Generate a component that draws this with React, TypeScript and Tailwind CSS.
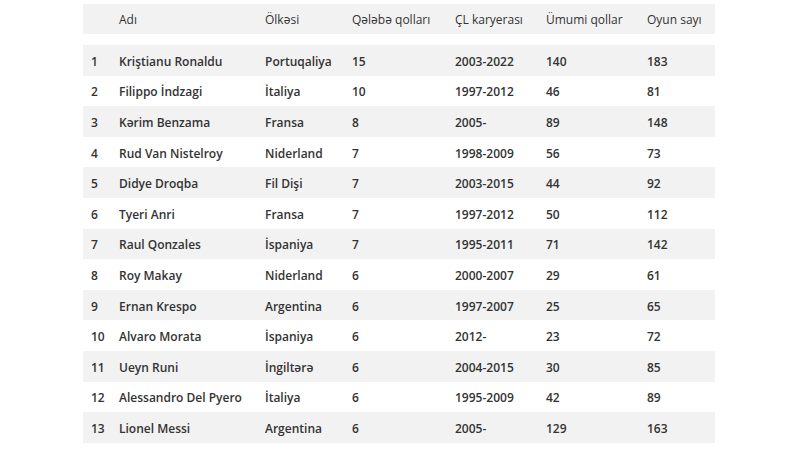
import React from "react";

const rows = [
  ["1", "Kriştianu Ronaldu", "Portuqaliya", "15", "2003-2022", "140", "183"],
  ["2", "Filippo İndzagi", "İtaliya", "10", "1997-2012", "46", "81"],
  ["3", "Kərim Benzama", "Fransa", "8", "2005-", "89", "148"],
  ["4", "Rud Van Nistelroy", "Niderland", "7", "1998-2009", "56", "73"],
  ["5", "Didye Droqba", "Fil Dişi", "7", "2003-2015", "44", "92"],
  ["6", "Tyeri Anri", "Fransa", "7", "1997-2012", "50", "112"],
  ["7", "Raul Qonzales", "İspaniya", "7", "1995-2011", "71", "142"],
  ["8", "Roy Makay", "Niderland", "6", "2000-2007", "29", "61"],
  ["9", "Ernan Krespo", "Argentina", "6", "1997-2007", "25", "65"],
  ["10", "Alvaro Morata", "İspaniya", "6", "2012-", "23", "72"],
  ["11", "Ueyn Runi", "İngiltərə", "6", "2004-2015", "30", "85"],
  ["12", "Alessandro Del Pyero", "İtaliya", "6", "1995-2009", "42", "89"],
  ["13", "Lionel Messi", "Argentina", "6", "2005-", "129", "163"],
];

const headers = ["", "Adı", "Ölkəsi", "Qələbə qolları", "ÇL karyerası", "Ümumi qollar", "Oyun sayı"];

const grid = "grid grid-cols-[28px_146px_87px_103px_91px_101px_76px]";

export default function App() {
  return (
    <div
      className="w-[800px] h-[450px] bg-white text-[#333] overflow-hidden"
      style={{ fontFamily: '"Open Sans", "Liberation Sans", sans-serif' }}
    >
      <div className="ml-[83px] w-[632px] pt-[4px]">
        <div className={`${grid} h-[30px] items-center bg-[#f2f2f2] text-[12px] font-normal`}>
          {headers.map((h, i) => (
            <div key={i} className="pl-[8px] pt-[1px] whitespace-nowrap">{h}</div>
          ))}
        </div>
        <div className="h-[11px]" />
        {rows.map((r, ri) => (
          <div
            key={ri}
            className={`${grid} h-[30.6px] items-center text-[12px] font-semibold ${ri % 2 === 0 ? "bg-[#f2f2f2]" : "bg-white"}`}
          >
            {r.map((c, ci) => (
              <div key={ci} className="pl-[8px] pt-[3px] whitespace-nowrap">{c}</div>
            ))}
          </div>
        ))}
      </div>
    </div>
  );
}
